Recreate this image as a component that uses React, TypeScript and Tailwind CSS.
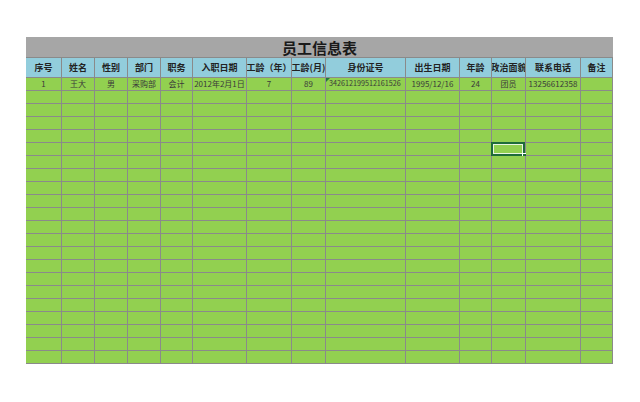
import React from 'react';

const cols = [36, 33, 33, 33, 32, 54, 45, 34, 80, 54, 32, 34, 55, 32];
const heads = ['序号', '姓名', '性别', '部门', '职务', '入职日期', '工龄（年）', '工龄(月)', '身份证号', '出生日期', '年龄', '政治面貌', '联系电话', '备注'];
const first = ['1', '王大', '男', '采购部', '会计', '2012年2月1日', '7', '89', '342612199512161526', '1995/12/16', '24', '团员', '13256612358', ''];
const emptyRows = 21;

const font = { fontFamily: '"Noto Sans CJK SC", "Liberation Sans", sans-serif' };

export default function App() {
  const tpl = 'grid-cols-[36px_33px_33px_33px_32px_54px_45px_34px_80px_54px_32px_34px_55px_32px]';
  return (
    <div className="w-[640px] h-[402px] bg-white pt-[37px] pl-[26px]" style={font}>
      <div className="w-[587px]">
        <div className="h-[21px] bg-[#a6a6a6] border-b border-[#8a8a8a] flex items-center justify-center text-[15px] font-bold text-[#1a1a1a] leading-none">
          员工信息表
        </div>
        <div className={`grid ${tpl}`}>
          {heads.map((h) => (
            <div
              key={h}
              className="h-[20px] bg-[#92cddc] border-r border-b border-[#8a8a8a] flex items-center justify-center overflow-hidden whitespace-nowrap text-[9px] font-bold text-[#222] leading-none"
            >
              {h}
            </div>
          ))}
          {first.map((v, i) => (
            <div
              key={'f' + i}
              className={`relative h-[13px] bg-[#92d050] border-r border-b border-[#8a8a8a] flex items-center ${i === 8 ? 'justify-start pl-[3px] text-[7.2px]' : 'justify-center text-[8px]'} overflow-hidden whitespace-nowrap text-[#3a3a3a] leading-none`}
            >
              {i === 8 && (
                <span className="absolute left-0 top-0 w-0 h-0 border-t-[4px] border-r-[4px] border-t-[#1f7a3a] border-r-transparent" />
              )}
              {v}
            </div>
          ))}
          {Array.from({ length: emptyRows }).map((_, r) =>
            cols.map((_, c) => (
              <div
                key={r + '-' + c}
                className="relative h-[13px] bg-[#92d050] border-r border-b border-[#8a8a8a]"
              >
                {r === 4 && c === 11 && (
                  <div className="absolute -left-px -top-px w-[34px] h-[14px] border-2 border-[#1e6b3a] shadow-[inset_0_0_0_1px_#e8f5e0]">
                    <span className="absolute -right-[4px] -bottom-[4px] w-[5px] h-[5px] bg-[#1e6b3a] border border-white" />
                  </div>
                )}
              </div>
            ))
          )}
        </div>
      </div>
    </div>
  );
}
